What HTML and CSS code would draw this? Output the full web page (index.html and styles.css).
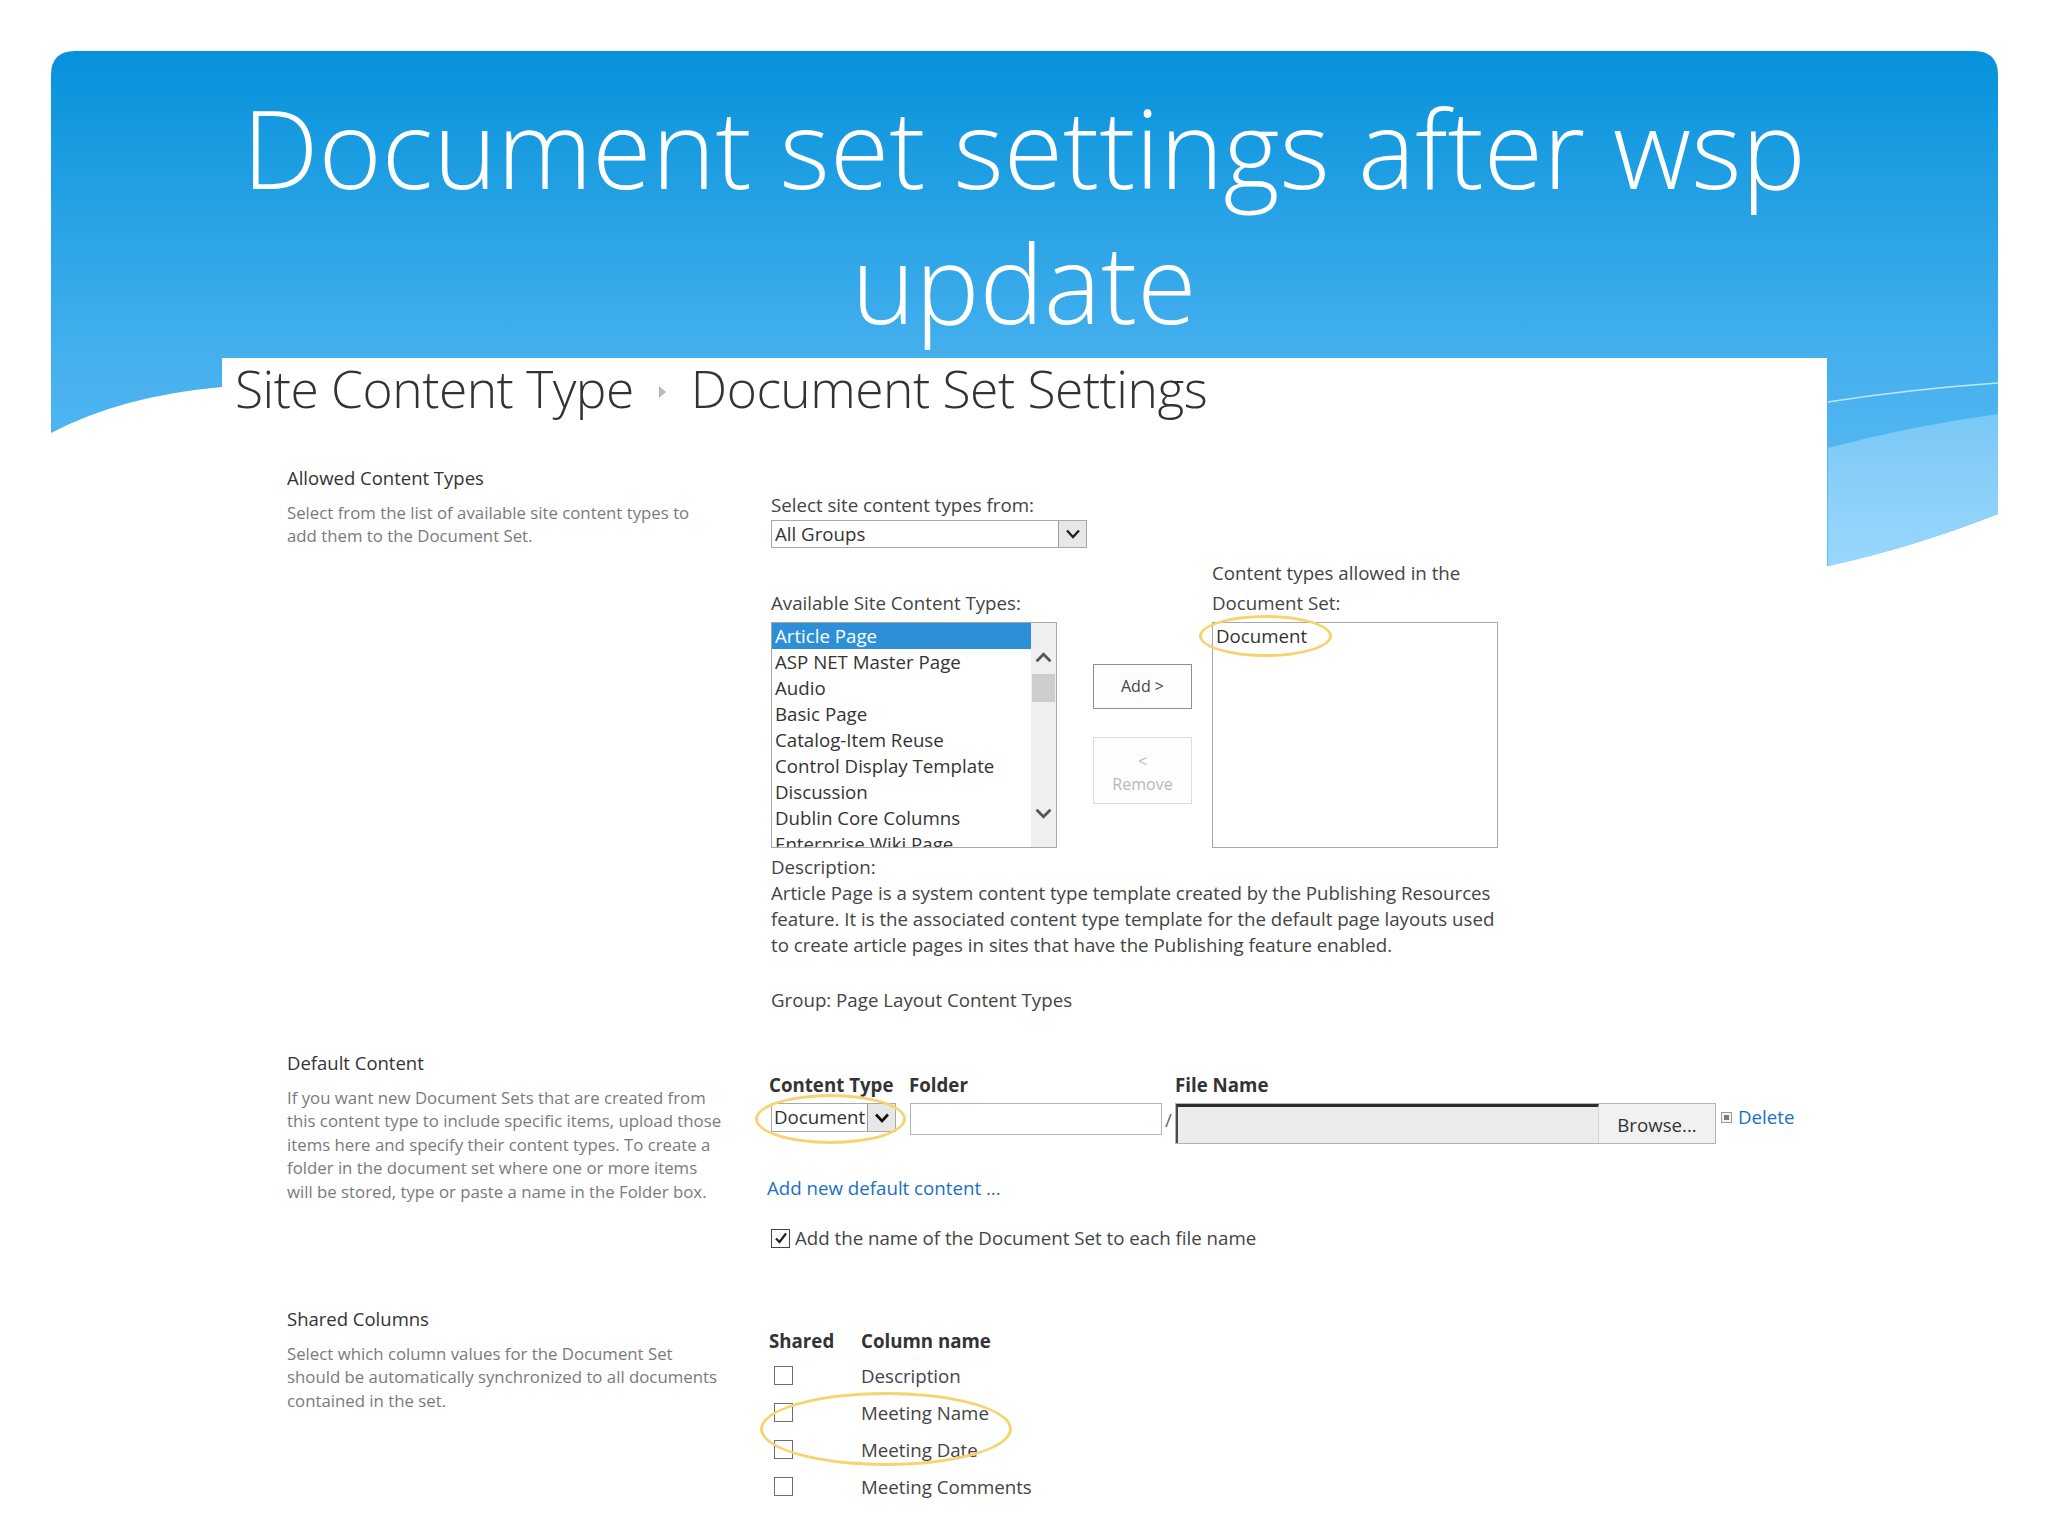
FILE: index.html
```
<!DOCTYPE html>
<html lang="en">
<head>
<meta charset="utf-8">
<title>Document set settings after wsp update</title>
<link rel="stylesheet" href="styles.css">
</head>
<body>
<div class="slide">
  <svg class="banner" viewBox="0 0 1947 520" width="1947" height="520" aria-hidden="true">
    <defs>
      <linearGradient id="bg1" x1="0" y1="0" x2="0" y2="1">
        <stop offset="0" stop-color="#0692db"/>
        <stop offset="0.6" stop-color="#45b0ee"/>
        <stop offset="1" stop-color="#5ebef3"/>
      </linearGradient>
      <linearGradient id="bg2" x1="0" y1="0" x2="0" y2="1">
        <stop offset="0" stop-color="#79c8f5"/>
        <stop offset="1" stop-color="#9ad7fc"/>
      </linearGradient>
    </defs>
    <path d="M0,24 Q0,0 24,0 H1923 Q1947,0 1947,24 V463 Q1860,497 1777,515 L171,336 Q70,345 0,382 Z" fill="url(#bg1)"/>
    <path d="M1777,397 Q1860,375 1947,363 V463 Q1860,497 1777,515 Z" fill="url(#bg2)"/>
    <path d="M1777,351 Q1860,338 1947,332" fill="none" stroke="#bfe6fd" stroke-width="1.5"/>
  </svg>

  <h1 class="title">Document set settings after wsp<br>update</h1>

  <div class="panel">
    <div class="crumb">
      <span>Site Content Type</span>
      <svg class="crumb-sep" viewBox="0 0 7 12" width="7" height="12"><path d="M0,0 L7,6 L0,12 Z" fill="#b9b9b9"/></svg>
      <span>Document Set Settings</span>
    </div>

    <section class="sec sec1">
      <div class="side">
        <h2>Allowed Content Types</h2>
        <p>Select from the list of available site content types to<br>add them to the Document Set.</p>
      </div>
      <div class="main">
        <div class="lbl">Select site content types from:</div>
        <div class="select select-wide">
          <span class="select-text">All Groups</span>
          <span class="select-arrow"><svg viewBox="0 0 14 10" width="14" height="10"><path d="M1,1.5 L7,8 L13,1.5" fill="none" stroke="#222" stroke-width="2.4"/></svg></span>
        </div>

        <div class="picker">
          <div class="pcol">
            <div class="lbl lbl-tall">Available Site Content Types:</div>
            <div class="listbox">
              <div class="items">
                <div class="item item-sel">Article Page</div>
                <div class="item">ASP NET Master Page</div>
                <div class="item">Audio</div>
                <div class="item">Basic Page</div>
                <div class="item">Catalog-Item Reuse</div>
                <div class="item">Control Display Template</div>
                <div class="item">Discussion</div>
                <div class="item">Dublin Core Columns</div>
                <div class="item">Enterprise Wiki Page</div>
              </div>
              <div class="scroll">
                <svg class="chev" viewBox="0 0 16 10" width="17" height="11"><path d="M1.5,8.5 L8,2 L14.5,8.5" fill="none" stroke="#555" stroke-width="2.6"/></svg>
                <div class="thumb"></div>
                <div class="scroll-fill"></div>
                <svg class="chev" viewBox="0 0 16 10" width="17" height="11"><path d="M1.5,1.5 L8,8 L14.5,1.5" fill="none" stroke="#555" stroke-width="2.6"/></svg>
              </div>
            </div>
          </div>
          <div class="btns">
            <div class="btn">Add &gt;</div>
            <div class="btn btn-off">&lt;<br>Remove</div>
          </div>
          <div class="pcol">
            <div class="lbl lbl-tall">Content types allowed in the<br>Document Set:</div>
            <div class="listbox listbox-right">
              <div class="items">
                <div class="item">Document</div>
              </div>
              <span class="ring ring-doc"></span>
            </div>
          </div>
        </div>

        <div class="desc">
          <div>Description:</div>
          <div>Article Page is a system content type template created by the Publishing Resources<br>feature. It is the associated content type template for the default page layouts used<br>to create article pages in sites that have the Publishing feature enabled.</div>
          <div class="group">Group: Page Layout Content Types</div>
        </div>
      </div>
    </section>

    <section class="sec sec2">
      <div class="side">
        <h2>Default Content</h2>
        <p>If you want new Document Sets that are created from<br>this content type to include specific items, upload those<br>items here and specify their content types. To create a<br>folder in the document set where one or more items<br>will be stored, type or paste a name in the Folder box.</p>
      </div>
      <div class="main">
        <div class="dc-head">
          <span class="h-ct">Content Type</span>
          <span class="h-folder">Folder</span>
          <span class="h-file">File Name</span>
        </div>
        <div class="dc-row">
          <div class="select select-ct">
            <span class="select-text">Document</span>
            <span class="select-arrow"><svg viewBox="0 0 14 10" width="14" height="10"><path d="M1,1.5 L7,8 L13,1.5" fill="none" stroke="#111" stroke-width="2.6"/></svg></span>
            <span class="ring ring-ct"></span>
          </div>
          <div class="textbox"></div>
          <span class="slash">/</span>
          <div class="file">
            <div class="file-field"></div>
            <div class="file-btn">Browse...</div>
          </div>
          <div class="del">
            <span class="del-icon"><span></span></span>
            <span class="link">Delete</span>
          </div>
        </div>
        <div class="link add-link">Add new default content ...</div>
        <div class="check-row">
          <span class="cbox cbox-on"><svg viewBox="0 0 14 14" width="14" height="14"><path d="M2,7.5 L5.5,11 L12,2.5" fill="none" stroke="#222" stroke-width="2.2"/></svg></span>
          <span>Add the name of the Document Set to each file name</span>
        </div>
      </div>
    </section>

    <section class="sec sec3">
      <div class="side">
        <h2>Shared Columns</h2>
        <p>Select which column values for the Document Set<br>should be automatically synchronized to all documents<br>contained in the set.</p>
      </div>
      <div class="main">
        <div class="cols">
          <div class="cols-head"><span class="c1">Shared</span><span>Column name</span></div>
          <div class="cols-row"><span class="c1"><span class="cbox"></span></span><span>Description</span></div>
          <div class="cols-row"><span class="c1"><span class="cbox"></span></span><span>Meeting Name</span></div>
          <div class="cols-row"><span class="c1"><span class="cbox"></span></span><span>Meeting Date</span></div>
          <div class="cols-row"><span class="c1"><span class="cbox"></span></span><span>Meeting Comments</span></div>
          <span class="ring ring-cols"></span>
        </div>
      </div>
    </section>
  </div>
</div>
</body>
</html>
```
FILE: styles.css
```
* { box-sizing: border-box; }

html, body {
  margin: 0;
  padding: 0;
  background: #ffffff;
}

body {
  width: 2048px;
  height: 1536px;
  overflow: hidden;
  font-family: "Segoe UI", "Open Sans", "Noto Sans", sans-serif;
  color: #444444;
}

.slide {
  position: relative;
  width: 2048px;
  height: 1536px;
}

.banner {
  position: absolute;
  left: 51px;
  top: 51px;
}

.title {
  position: relative;
  margin: 0;
  padding-top: 80px;
  font-family: "Segoe UI Light", "Open Sans", sans-serif;
  font-weight: 300;
  font-size: 108px;
  line-height: 135px;
  color: #ffffff;
  text-align: center;
  height: 351px;
}

.panel {
  position: relative;
  margin-left: 222px;
  margin-top: 7px;
  width: 1605px;
  height: 1178px;
  background: #ffffff;
}

/* breadcrumb */
.crumb {
  display: flex;
  align-items: baseline;
  padding-left: 13px;
  font-family: "Segoe UI Light", "Open Sans", sans-serif;
  font-weight: 300;
  font-size: 51.5px;
  line-height: 61px;
  height: 60px;
  color: #333333;
  letter-spacing: -0.5px;
}

.crumb-sep {
  margin: 0 25px 0 25px;
  align-self: center;
  position: relative;
  top: 4px;
}

/* sections */
.sec {
  display: grid;
  grid-template-columns: 484px 1fr;
  padding-left: 65px;
}

.sec1 { margin-top: 47px; }
.sec2 { margin-top: 37px; }
.sec3 { margin-top: 55px; }

.side h2 {
  margin: 0;
  font-size: 18.5px;
  font-weight: 400;
  line-height: 26px;
  color: #333333;
}

.side p {
  margin: 10px 0 0;
  font-size: 16.8px;
  line-height: 23.4px;
  color: #7a7a7a;
  white-space: nowrap;
}

.main {
  padding-top: 22px;
  font-size: 18.7px;
  line-height: 26px;
  color: #444444;
  white-space: nowrap;
}

.sec1 .main { padding-top: 27px; }

.lbl { line-height: 26px; }

.lbl-tall { line-height: 30px; }

/* selects */
.select {
  position: relative;
  display: flex;
  align-items: stretch;
  border: 1px solid #a9a9a9;
  background: #ffffff;
}

.select-wide {
  margin-top: 2px;
  width: 316px;
  height: 28px;
}

.select-text {
  flex: 1;
  padding-left: 3px;
  font-size: 18.7px;
  line-height: 26px;
  color: #333333;
}

.select-arrow {
  width: 28px;
  display: flex;
  align-items: center;
  justify-content: center;
  background: #e7e7e7;
  border-left: 1px solid #9a9a9a;
}

/* picker */
.picker {
  display: flex;
  align-items: flex-end;
  margin-top: 10px;
}

.pcol { width: 286px; }

.listbox {
  position: relative;
  display: flex;
  margin-top: 4px;
  height: 226px;
  border: 1px solid #a8a8a8;
  background: #ffffff;
}

.items {
  flex: 1;
  overflow: hidden;
}

.item {
  height: 26px;
  padding-left: 3px;
  font-size: 18.7px;
  line-height: 26px;
  color: #333333;
}

.item-sel {
  background: #2c8fd8;
  color: #ffffff;
}

.scroll {
  width: 25px;
  display: flex;
  flex-direction: column;
  align-items: center;
  background: #efefef;
  padding: 29px 0 28px;
}

.thumb {
  margin-top: 11px;
  width: 23px;
  height: 28px;
  background: #cdcdcd;
}

.scroll-fill { flex: 1; }

.btns {
  display: flex;
  flex-direction: column;
  gap: 28px;
  width: 99px;
  margin: 0 20px 44px 36px;
}

.btn {
  height: 45px;
  border: 1px solid #8f8f8f;
  background: #fdfdfd;
  display: flex;
  align-items: center;
  justify-content: center;
  text-align: center;
  font-size: 16px;
  line-height: 23px;
  color: #444444;
}

.btn-off {
  height: 67px;
  border-color: #dddddd;
  color: #b8b8b8;
  padding-top: 4px;
}

.ring {
  position: absolute;
  border: 3px solid #f5d470;
  border-radius: 50%;
  pointer-events: none;
}

.ring-doc {
  left: -14px;
  top: -8px;
  width: 133px;
  height: 42px;
}

/* description */
.desc { margin-top: 6px; }

.group { margin-top: 29px; }

/* default content */
.dc-head {
  display: flex;
  font-weight: 700;
  color: #333333;
  margin-left: -2px;
}

.h-ct { width: 140px; }
.h-folder { width: 266px; }

.dc-row {
  display: flex;
  align-items: flex-start;
  margin-top: 5px;
}

.select-ct {
  width: 125px;
  height: 29px;
  margin-right: 14px;
}

.select-ct .select-text { padding-left: 2px; }

.ring-ct {
  left: -17px;
  top: -10px;
  width: 151px;
  height: 50px;
}

.textbox {
  width: 252px;
  height: 32px;
  border: 1px solid #b3b3b3;
  background: #ffffff;
}

.slash {
  width: 13px;
  text-align: center;
  padding-top: 4px;
  color: #666666;
}

.file {
  display: flex;
  width: 541px;
  height: 41px;
  border: 1px solid #b3b3b3;
  background: #f1f1f1;
}

.file-field {
  width: 423px;
  background: #ececec;
  border-top: 3px solid #2e2e2e;
  border-left: 2px solid #4a4a4a;
  border-right: 1px solid #d6d6d6;
}

.file-btn {
  flex: 1;
  display: flex;
  align-items: flex-end;
  justify-content: center;
  padding-bottom: 5px;
  color: #333333;
}

.del {
  display: flex;
  align-items: center;
  margin-left: 5px;
  margin-top: 1px;
  height: 26px;
}

.del-icon {
  width: 11px;
  height: 11px;
  border: 1px solid #9a9a9a;
  background: #f3f3f3;
  display: flex;
  align-items: center;
  justify-content: center;
  margin-right: 6px;
}

.del-icon span {
  width: 5px;
  height: 5px;
  background: #7a7a7a;
}

.link {
  color: #1a6fc6;
  font-size: 18.7px;
}

.add-link {
  margin-top: 31px;
  margin-left: -4px;
}

.check-row {
  display: flex;
  align-items: center;
  gap: 5px;
  margin-top: 24px;
}

.cbox {
  width: 19px;
  height: 19px;
  border: 1px solid #6f6f6f;
  background: #ffffff;
  display: inline-flex;
  align-items: center;
  justify-content: center;
}

.cbox-on { border-color: #444444; }

/* shared columns */
.cols { position: relative; }

.cols-head {
  display: flex;
  font-weight: 700;
  color: #333333;
  margin-left: -2px;
}

.cols-head .c1 { width: 92px; }

.cols-row {
  display: flex;
  align-items: center;
  height: 37px;
}

.cols-row .c1 {
  width: 90px;
  padding-left: 3px;
  display: flex;
  align-items: center;
}

.cols-head + .cols-row { margin-top: 3px; }

.ring-cols {
  left: -11px;
  top: 64px;
  width: 252px;
  height: 74px;
}
```
